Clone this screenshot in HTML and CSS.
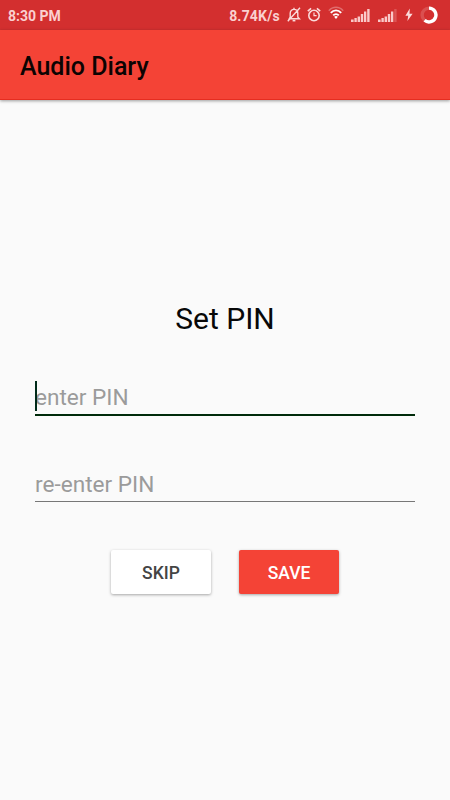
FILE: index.html
```html
<!DOCTYPE html>
<html lang="en">
<head>
<meta charset="utf-8">
<title>Audio Diary</title>
<link rel="stylesheet" href="styles.css">
</head>
<body>
<header class="status">
  <span class="clock">8:30 PM</span>
  <span class="speed">8.74K/s</span>
  <svg class="bell" width="14" height="16" viewBox="0 0 14 16" fill="none" stroke="#fbdada" stroke-width="1.4">
    <path d="M2.2 11.8 3.2 10V6.2C3.2 3.8 4.7 2.4 7 2.4s3.8 1.4 3.8 3.8V10l1.6 1.8ZM13 .8.8 14.2M7 .8v1.6"/>
    <path d="M5.6 13.6h2.8" stroke-width="1.7"/>
  </svg>
  <svg class="alarm" width="14" height="16" viewBox="0 0 14 16" fill="none" stroke="#fbdada" stroke-width="1.6">
    <circle cx="7" cy="8.5" r="5.2"/>
    <path d="M.8 4.1 4.1 1.3M13.2 4.1 9.9 1.3"/>
    <path d="M7 5.5v3.2h2.6" stroke-width="1.2"/>
  </svg>
  <svg class="wifi" width="16" height="16" viewBox="0 0 16 16" fill="none" stroke="#fff" stroke-width="1.9">
    <path d="M.8 4.7C4.8.1 11.2.1 15.2 4.7" stroke-opacity=".3" stroke-width="1.4"/>
    <path d="M2.8 6.8c3-3.2 7.4-3.2 10.4 0M5.2 9.4c1.6-1.7 4-1.7 5.6 0"/>
    <path d="m8 13-1.9-2.2q1.9-1.4 3.8 0Z" fill="#fff" stroke="none"/>
  </svg>
  <svg class="signal" width="19" height="16" viewBox="0 0 19 16" fill="#fac9c9">
    <path d="M0 12.4h2.6V15H0zM3.4 11h2.4v4H3.4zM6.6 9.4H9V15H6.6zM9.8 7h2.4v8H9.8zM13 4.6h2.3V15H13zM16.2 2h2.4v13h-2.4z"/>
  </svg>
  <svg class="signal signal-two" width="19" height="16" viewBox="0 0 19 16" fill="#fac9c9">
    <path d="M0 12.4h2.6V15H0zM3.4 11h2.4v4H3.4zM6.6 9.4H9V15H6.6zM9.8 7h2.4v8H9.8zM13 4.6h2.3V15H13z"/>
    <path d="M16.2 2h2.4v13h-2.4z" opacity=".25"/>
  </svg>
  <svg class="bolt" width="8" height="16" viewBox="0 0 8 16" fill="#fbdada">
    <path d="M4.8 1.4.4 8.8h2.8L2.4 14 7.6 6.8H4.5Z"/>
  </svg>
  <svg class="battery" width="18" height="18" viewBox="0 0 18 18" fill="none" stroke="#fff" stroke-width="3.4">
    <circle cx="9" cy="9" r="6.9" stroke-opacity=".16"/>
    <path d="M9 2.1a6.9 6.9 0 1 1-4.4 12.2"/>
  </svg>
</header>
<div class="toolbar"><h1 class="app-title">Audio Diary</h1></div>
<main class="content">
  <h2 class="heading">Set PIN</h2>
  <div class="field field-active"><span class="caret"></span><span class="hint">enter PIN</span></div>
  <div class="field"><span class="hint">re-enter PIN</span></div>
  <div class="actions">
    <button class="button">SKIP</button>
    <button class="button button-primary">SAVE</button>
  </div>
</main>
</body>
</html>
```
FILE: styles.css
```css
* { box-sizing: border-box; }
body {
  margin: 0;
  height: 800px;
  overflow: hidden;
  background: #fafafa;
  font-family: Roboto, "Liberation Sans", sans-serif;
}
.status {
  height: 30px;
  display: flex;
  align-items: center;
  padding: 0 12px 0 8px;
  background: #d32f2f;
  color: #fad0d0;
  font-size: 14px;
  font-weight: 700;
}
.status svg { flex: none; }
.clock { line-height: 30px; padding-top: 1px; }
.speed { margin-left: auto; padding-top: 1px; letter-spacing: 0.2px; }
.bell { margin-left: 7px; }
.alarm { margin-left: 6px; }
.wifi { margin-left: 7px; margin-top: -2px; }
.signal { margin-left: 7px; }
.signal-two { margin-left: 8px; }
.bolt { margin-left: 8px; }
.battery { margin-left: 7px; }
.toolbar {
  height: 70px;
  display: flex;
  align-items: center;
  padding: 5px 20px 0;
  background: #f44336;
  border-bottom: 1px solid #e52d20;
  box-shadow: 0 1px 3px rgba(0, 0, 0, 0.38);
}
.app-title { margin: 0; font-size: 25px; line-height: 30px; font-weight: 500; color: #0c0302; }
.content { padding: 199px 35px 0; }
.heading {
  margin: 0;
  height: 40px;
  line-height: 40px;
  text-align: center;
  font-size: 30px;
  font-weight: 400;
  color: #080808;
}
.field {
  position: relative;
  height: 38px;
  margin-top: 39px;
  border-bottom: 1px solid #777;
  color: #9b9b9b;
  font-size: 22.6px;
  line-height: 41px;
}
.field-active { border-bottom: 2px solid #002b0a; line-height: 40px; }
.field + .field { margin-top: 48px; }
.caret { position: absolute; left: 0; top: 3px; width: 2px; height: 30px; background: #002b1a; }
.actions { display: flex; justify-content: center; gap: 28px; margin-top: 48px; }
.button {
  width: 100px;
  height: 44px;
  padding: 2px 0 0;
  border: 0;
  border-radius: 2px;
  background: #fff;
  box-shadow: 0 1px 3px rgba(0, 0, 0, 0.34);
  color: #444;
  font-family: inherit;
  font-size: 17.5px;
  font-weight: 500;
}
.button-primary { background: #f44336; color: #fff; }
```
